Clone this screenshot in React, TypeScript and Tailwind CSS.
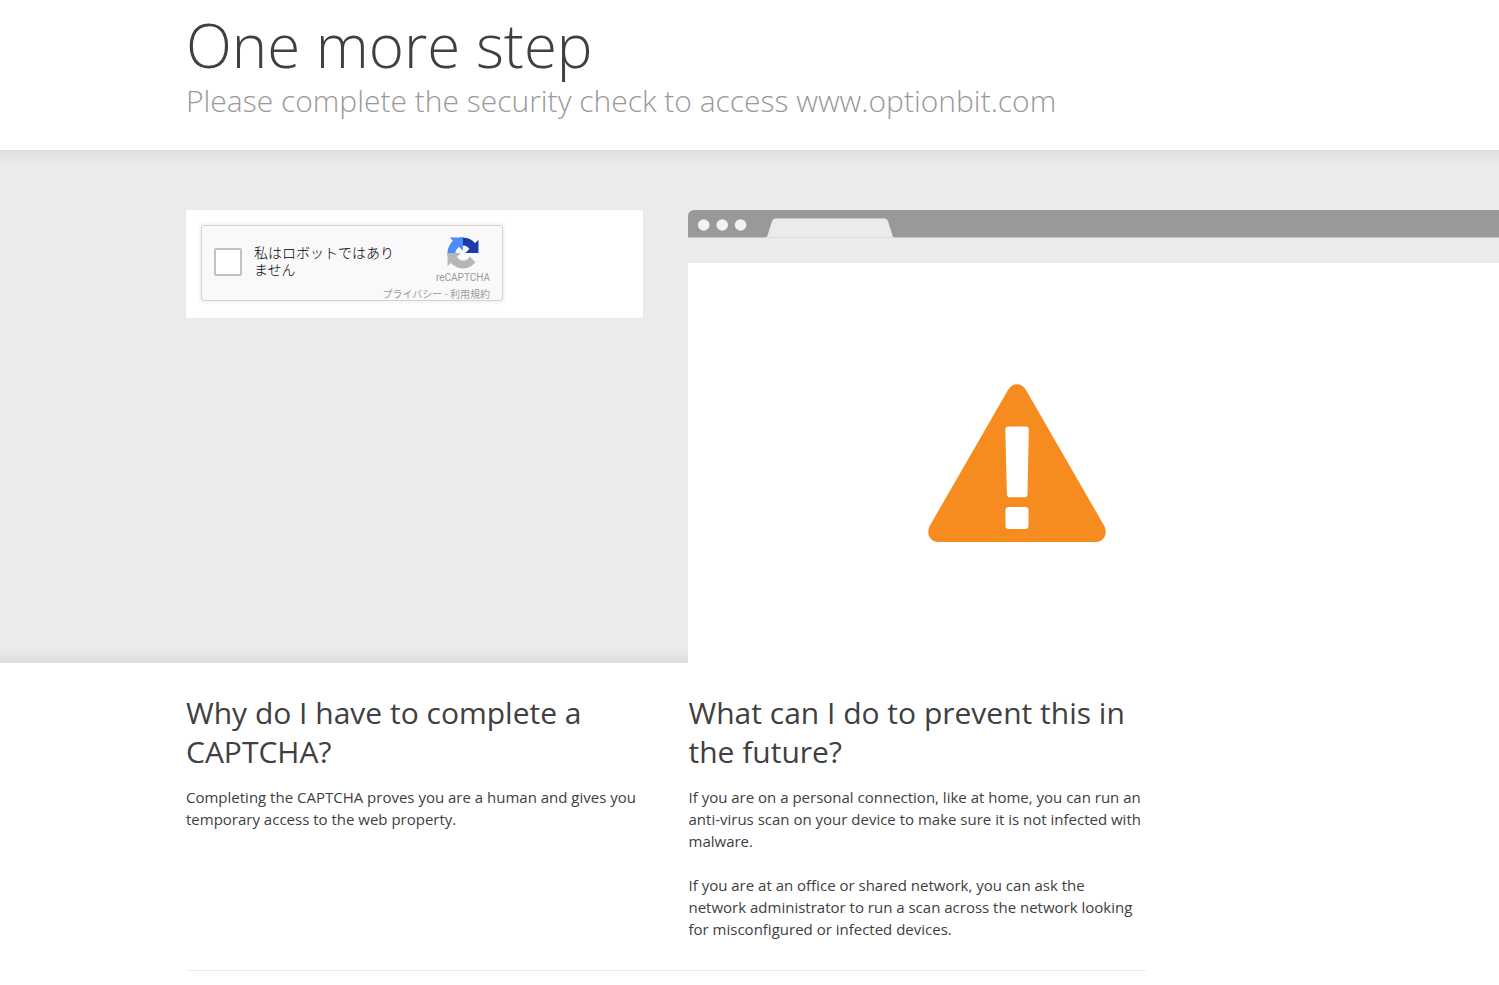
const reasons = [
  {
    title: 'Why do I have to complete a CAPTCHA?',
    paragraphs: [
      'Completing the CAPTCHA proves you are a human and gives you temporary access to the web property.',
    ],
  },
  {
    title: 'What can I do to prevent this in the future?',
    paragraphs: [
      'If you are on a personal connection, like at home, you can run an anti-virus scan on your device to make sure it is not infected with malware.',
      'If you are at an office or shared network, you can ask the network administrator to run a scan across the network looking for misconfigured or infected devices.',
    ],
  },
]

const RecaptchaLogo = () => (
  <svg className="w-8 h-8" viewBox="-1 -1 66 66" aria-hidden="true">
    <path
      fill="#1c3aa9"
      d="M64 31.955l-.033-1.37V4.687l-7.16 7.16C50.948 4.674 42.033.093 32.05.093c-10.389 0-19.622 4.96-25.458 12.64l11.736 11.86a15.55 15.55 0 0 1 4.754-5.334c2.05-1.6 4.952-2.906 8.968-2.906.485 0 .86.057 1.135.163 4.976.393 9.288 3.14 11.828 7.124l-8.307 8.307 27.294-.107"
    />
    <path
      fill="#4a8df8"
      d="M31.862.094l-1.37.033H4.594l7.16 7.16C4.58 13.147 0 22.06 0 32.046c0 10.388 4.96 19.622 12.64 25.458L24.5 45.768a15.55 15.55 0 0 1-5.334-4.754c-1.6-2.05-2.906-4.952-2.906-8.968 0-.485.057-.86.163-1.135.393-4.976 3.14-9.288 7.124-11.828l8.307 8.307L31.96.096"
    />
    <path
      fill="#b5b6b5"
      d="M.093 32.047l.033 1.37v25.898l7.16-7.16c5.86 7.173 14.774 11.754 24.76 11.754 10.388 0 19.622-4.96 25.458-12.64l-11.736-11.86a15.55 15.55 0 0 1-4.754 5.334c-2.05 1.6-4.952 2.906-8.968 2.906-.485 0-.86-.057-1.135-.163-4.976-.393-9.288-3.14-11.828-7.124l8.307-8.307c-10.522.04-22.4.066-27.295-.005"
    />
  </svg>
)

const Captcha = () => (
  <form className="bg-white rounded-xs p-[15px] h-[108px]">
    <div className="flex items-center w-[302px] h-[76px] px-3 pb-[2px] bg-[#f9f9f9] border border-[#d3d3d3] rounded-[3px] shadow-[0_0_4px_1px_rgba(0,0,0,0.08)]">
      <input
        id="not-a-robot"
        type="checkbox"
        className="appearance-none shrink-0 w-7 h-7 bg-white border-2 border-[#c1c1c1] rounded-xs"
      />
      <label
        htmlFor="not-a-robot"
        lang="ja"
        className="w-[142px] ml-3 text-sm leading-[17px] font-light text-black font-['Roboto','Noto_Sans_CJK_JP',sans-serif]"
      >
        私はロボットではありません
      </label>
      <div className="flex flex-col items-end w-[54px] h-full ml-auto pt-[11px] text-[10px] text-[#9b9b9b] font-['Roboto','Noto_Sans_CJK_JP',sans-serif]">
        <div className="flex flex-col items-center">
          <RecaptchaLogo />
          <span className="leading-[18px]">reCAPTCHA</span>
        </div>
        <div lang="ja" className="whitespace-nowrap leading-4">
          <a href="#privacy">プライバシー</a>
          {' - '}
          <a href="#terms">利用規約</a>
        </div>
      </div>
    </div>
  </form>
)

const BrowserWindow = () => (
  <div className="flex flex-col h-[453px] bg-white">
    <div className="h-[53px] bg-[#ebebeb]">
      <div className="h-7 bg-[#999] border-b border-[#c5c5c5] rounded-tl-md">
        <svg className="block w-[210px] h-7" viewBox="0 0 210 28" aria-hidden="true">
          <g fill="#f2f2f2">
            <circle cx="15.7" cy="15" r="5.8" />
            <circle cx="34.2" cy="15" r="5.8" />
            <circle cx="52.6" cy="15" r="5.8" />
          </g>
          <path
            fill="#ebebeb"
            d="M77.5 28 Q79 27 79.5 25.5 L84 11.2 Q85 8.5 87.5 8.5 H196.5 Q199 8.5 200 11.2 L204.500 25.5 Q205 27 206.5 28 Z"
          />
          <path stroke="#c5c5c5" fill="none" d="M87 8.5 H197" />
          <path stroke="#dedede" d="M79 27.5 H205" />
        </svg>
      </div>
    </div>
    <div className="pl-[240px] pt-[121px]">
      <svg className="block w-[178px] h-[158px]" viewBox="0 0 178 158" role="img" aria-label="Warning">
        <path
          fill="#f68b1f"
          d="M80 6 Q83.5 0.3 89 0.3 Q94.5 0.3 98 6 L176.6 142.5 Q179 148.5 176.5 153 Q173.5 157.8 168.5 158 H9.5 Q4.5 157.8 1.5 153 Q-1 148.5 1.4 142.5 Z"
        />
        <path
          fill="#fff"
          d="M80.5 42.5 H97.7 Q100.9 42.5 100.8 45.7 L99.5 110.2 Q99.4 113.3 96.4 113.3 H82 Q79 113.3 78.9 110.2 L77.3 45.7 Q77.2 42.5 80.5 42.5 Z"
        />
        <rect x="77.5" y="123" width="23" height="22" rx="3.2" fill="#fff" />
      </svg>
    </div>
  </div>
)

export default function App() {
  return (
    <div className="min-h-screen bg-white text-[#404040] font-['Open_Sans',sans-serif]">
      <header className="pl-[186px] pt-[9px] pb-[30px]">
        <h1 className="text-6xl leading-[72px] font-light">One more step</h1>
        <h2 className="text-3xl leading-[39px] font-light text-[#999]">
          Please complete the security check to access www.optionbit.com
        </h2>
      </header>

      <section className="relative flex gap-[45px] pl-[186px] pt-[60px] bg-[#ebebeb]">
        <div className="absolute inset-x-0 top-0 h-[15px] bg-linear-to-b from-[#dedede] to-[#ebebeb]" />
        <div className="absolute inset-x-0 bottom-0 h-[15px] bg-linear-to-t from-[#dedede] to-[#ebebeb]" />
        <div className="relative w-[457px] shrink-0">
          <Captcha />
        </div>
        <div className="relative flex-1">
          <BrowserWindow />
        </div>
      </section>

      <main className="pl-[186px]">
        <div className="flex gap-[45px] max-w-[960px] py-[30px] border-b border-[#ebebeb]">
          {reasons.map((reason) => (
            <div key={reason.title} className="flex-1">
              <h2 className="text-3xl leading-[39px] mb-[15px]">{reason.title}</h2>
              <div className="flex flex-col gap-[22px] text-[15px] leading-[22px]">
                {reason.paragraphs.map((text) => (
                  <p key={text}>{text}</p>
                ))}
              </div>
            </div>
          ))}
        </div>
      </main>
    </div>
  )
}
